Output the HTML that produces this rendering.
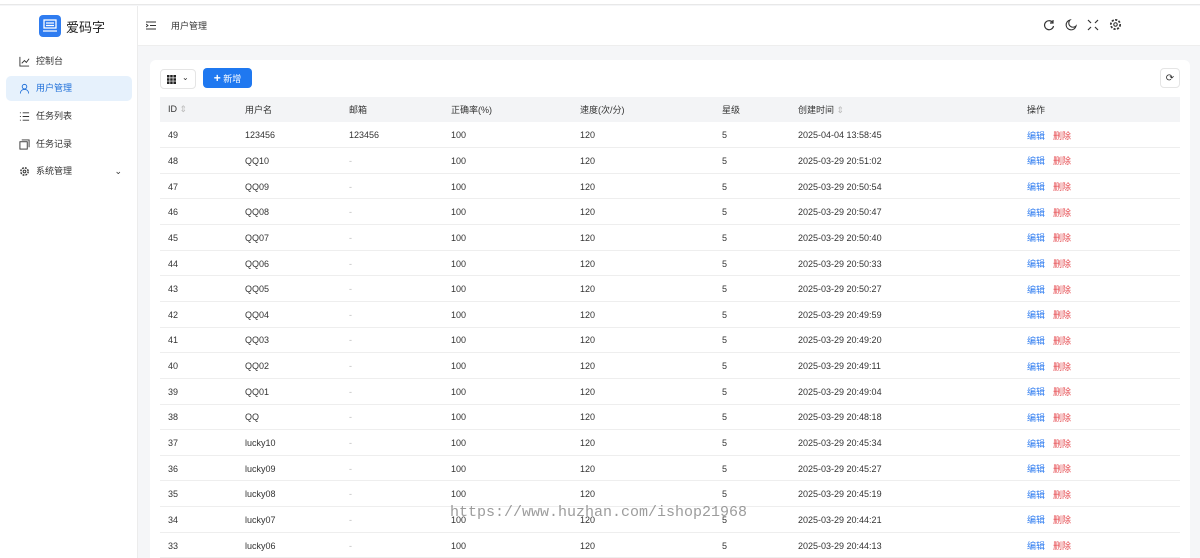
<!DOCTYPE html><html><head><meta charset="utf-8"><style>
*{margin:0;padding:0;box-sizing:border-box}
html,body{width:1200px;height:558px;overflow:hidden}
body{font-family:"Liberation Sans","Noto Sans CJK SC",sans-serif;font-size:9px;color:#333;background:#f5f6f8;position:relative}
.top{position:absolute;left:0;top:0;width:1200px;height:5px;background:#fff;border-bottom:1px solid #e8e8e8}
.side{position:absolute;left:0;top:6px;width:138px;height:552px;background:#fff;border-right:1px solid #ececec}
.logo{position:absolute;left:39px;top:9px;width:22px;height:22px;background:#2f7cf0;border-radius:4px}
.logot{position:absolute;left:66px;top:11px;font-size:13px;color:#222}
.mi{position:absolute;left:6px;width:126px;height:25px;border-radius:5px;line-height:25px;padding-left:30px;font-size:9px;color:#333}
.mi.act{background:#e6f1fc;color:#1e6fd9}
.ico{position:absolute;left:13px;top:7px;width:11px;height:11px}
.hdr{position:absolute;left:138px;top:6px;width:1062px;height:40px;background:#fff;border-bottom:1px solid #eee}
.card{position:absolute;left:150px;top:60px;width:1040px;height:510px;background:#fff;border-radius:6px}
table{position:absolute;left:10px;top:37px;width:1020px;border-collapse:collapse}
th{background:#f3f4f6;height:25px;text-align:left;font-weight:normal;color:#333;padding-left:8px}
td{height:25.65px;border-bottom:1px solid #eee;padding-left:8px;padding-top:1px;color:#333}
.e{color:#2f7cf0;margin-right:8px}.d{color:#e5484d}
.g{color:#bbb}
</style></head><body>
<div class="top"></div>
<div class="side">
<div class="logo"><svg width="22" height="22" viewBox="0 0 22 22"><rect x="5" y="5" width="12" height="8" fill="none" stroke="#fff" stroke-width="1.3"/><path d="M7 8h8M7 10.5h8M4 16h14" stroke="#fff" stroke-width="1.2"/></svg></div>
<div class="logot">爱码字</div>
<div class="mi" style="top:43px"><svg class="ico" viewBox="0 0 12 12"><path d="M1 1v10h10M3 8l3-3 2 2 3-4" fill="none" stroke="#333" stroke-width="1"/></svg>控制台</div>
<div class="mi act" style="top:70px"><svg class="ico" viewBox="0 0 12 12"><circle cx="6" cy="4" r="2.5" fill="none" stroke="#1e6fd9"/><path d="M1.5 11.5c0-3 2-4.5 4.5-4.5s4.5 1.5 4.5 4.5" fill="none" stroke="#1e6fd9"/></svg>用户管理</div>
<div class="mi" style="top:98px"><svg class="ico" viewBox="0 0 12 12"><path d="M1 2h1M1 6h1M1 10h1M4 2h7M4 6h7M4 10h7" stroke="#333"/></svg>任务列表</div>
<div class="mi" style="top:126px"><svg class="ico" viewBox="0 0 12 12"><rect x="1" y="3" width="8" height="8" fill="none" stroke="#333"/><path d="M3 1h8v8" fill="none" stroke="#333"/></svg>任务记录</div>
<div class="mi" style="top:153px"><svg class="ico" viewBox="0 0 12 12"><circle cx="6" cy="6" r="4" fill="none" stroke="#333" stroke-width="1.6" stroke-dasharray="2 1.2"/><circle cx="6" cy="6" r="1.5" fill="none" stroke="#333"/></svg>系统管理<span style="position:absolute;right:10px;font-size:9px">⌄</span></div>
</div>
<div class="hdr">
<svg style="position:absolute;left:8px;top:15px" width="10" height="9" viewBox="0 0 10 9"><path d="M0 1h10M4 4.5h6M0 8h10M0 3l2 1.5L0 6" stroke="#333" fill="none"/></svg>
<div style="position:absolute;left:33px;top:13px;font-size:9px">用户管理</div>
<svg style="position:absolute;left:905px;top:13px" width="12" height="12" viewBox="0 0 12 12"><path d="M10 4A4.5 4.5 0 1 0 10.5 7M10 1v3H7" fill="none" stroke="#333" stroke-width="1.2"/></svg>
<svg style="position:absolute;left:927px;top:13px" width="12" height="12" viewBox="0 0 12 12"><path d="M5 1a5 5 0 1 0 6 6A4 4 0 0 1 5 1z" fill="none" stroke="#333" stroke-width="1.1"/></svg>
<svg style="position:absolute;left:949px;top:13px" width="12" height="12" viewBox="0 0 12 12"><path d="M1 1l3 3M11 1L8 4M1 11l3-3M11 11L8 8" stroke="#333" stroke-width="1.2"/></svg>
<svg style="position:absolute;left:971px;top:12px" width="13" height="13" viewBox="0 0 12 12"><circle cx="6" cy="6" r="4.3" fill="none" stroke="#333" stroke-width="1.6" stroke-dasharray="2 1.3"/><circle cx="6" cy="6" r="1.6" fill="none" stroke="#333"/></svg>
</div>
<div class="card">
<div style="position:absolute;left:10px;top:9px;width:36px;height:20px;border:1px solid #e5e5e5;border-radius:4px"><svg style="position:absolute;left:6px;top:5px" width="9" height="9" viewBox="0 0 9 9"><path d="M0 0h2.5v2.5H0zM3.2 0h2.5v2.5H3.2zM6.4 0H9v2.5H6.4zM0 3.2h2.5v2.5H0zM3.2 3.2h2.5v2.5H3.2zM6.4 3.2H9v2.5H6.4zM0 6.4h2.5V9H0zM3.2 6.4h2.5V9H3.2zM6.4 6.4H9V9H6.4z" fill="#222"/></svg><span style="position:absolute;left:21px;top:3px;font-size:8px">⌄</span></div>
<div style="position:absolute;left:53px;top:8px;width:49px;height:20px;background:#1f78f0;border-radius:4px;color:#fff;line-height:20px;text-align:center;font-size:9px"><b style="font-size:12px">+</b> 新增</div>
<div style="position:absolute;left:1010px;top:8px;width:20px;height:20px;border:1px solid #e5e5e5;border-radius:4px;text-align:center;line-height:19px;font-size:10px">⟳</div>
<table>
<tr><th style="width:77px">ID <span class="g">⇕</span></th><th style="width:104px">用户名</th><th style="width:102px">邮箱</th><th style="width:129px">正确率(%)</th><th style="width:142px">速度(次/分)</th><th style="width:76px">星级</th><th style="width:229px">创建时间 <span class="g">⇕</span></th><th>操作</th></tr>
<tr><td>49</td><td>123456</td><td>123456</td><td>100</td><td>120</td><td>5</td><td>2025-04-04 13:58:45</td><td><span class="e">编辑</span><span class="d">删除</span></td></tr>
<tr><td>48</td><td>QQ10</td><td class="g">-</td><td>100</td><td>120</td><td>5</td><td>2025-03-29 20:51:02</td><td><span class="e">编辑</span><span class="d">删除</span></td></tr>
<tr><td>47</td><td>QQ09</td><td class="g">-</td><td>100</td><td>120</td><td>5</td><td>2025-03-29 20:50:54</td><td><span class="e">编辑</span><span class="d">删除</span></td></tr>
<tr><td>46</td><td>QQ08</td><td class="g">-</td><td>100</td><td>120</td><td>5</td><td>2025-03-29 20:50:47</td><td><span class="e">编辑</span><span class="d">删除</span></td></tr>
<tr><td>45</td><td>QQ07</td><td class="g">-</td><td>100</td><td>120</td><td>5</td><td>2025-03-29 20:50:40</td><td><span class="e">编辑</span><span class="d">删除</span></td></tr>
<tr><td>44</td><td>QQ06</td><td class="g">-</td><td>100</td><td>120</td><td>5</td><td>2025-03-29 20:50:33</td><td><span class="e">编辑</span><span class="d">删除</span></td></tr>
<tr><td>43</td><td>QQ05</td><td class="g">-</td><td>100</td><td>120</td><td>5</td><td>2025-03-29 20:50:27</td><td><span class="e">编辑</span><span class="d">删除</span></td></tr>
<tr><td>42</td><td>QQ04</td><td class="g">-</td><td>100</td><td>120</td><td>5</td><td>2025-03-29 20:49:59</td><td><span class="e">编辑</span><span class="d">删除</span></td></tr>
<tr><td>41</td><td>QQ03</td><td class="g">-</td><td>100</td><td>120</td><td>5</td><td>2025-03-29 20:49:20</td><td><span class="e">编辑</span><span class="d">删除</span></td></tr>
<tr><td>40</td><td>QQ02</td><td class="g">-</td><td>100</td><td>120</td><td>5</td><td>2025-03-29 20:49:11</td><td><span class="e">编辑</span><span class="d">删除</span></td></tr>
<tr><td>39</td><td>QQ01</td><td class="g">-</td><td>100</td><td>120</td><td>5</td><td>2025-03-29 20:49:04</td><td><span class="e">编辑</span><span class="d">删除</span></td></tr>
<tr><td>38</td><td>QQ</td><td class="g">-</td><td>100</td><td>120</td><td>5</td><td>2025-03-29 20:48:18</td><td><span class="e">编辑</span><span class="d">删除</span></td></tr>
<tr><td>37</td><td>lucky10</td><td class="g">-</td><td>100</td><td>120</td><td>5</td><td>2025-03-29 20:45:34</td><td><span class="e">编辑</span><span class="d">删除</span></td></tr>
<tr><td>36</td><td>lucky09</td><td class="g">-</td><td>100</td><td>120</td><td>5</td><td>2025-03-29 20:45:27</td><td><span class="e">编辑</span><span class="d">删除</span></td></tr>
<tr><td>35</td><td>lucky08</td><td class="g">-</td><td>100</td><td>120</td><td>5</td><td>2025-03-29 20:45:19</td><td><span class="e">编辑</span><span class="d">删除</span></td></tr>
<tr><td>34</td><td>lucky07</td><td class="g">-</td><td>100</td><td>120</td><td>5</td><td>2025-03-29 20:44:21</td><td><span class="e">编辑</span><span class="d">删除</span></td></tr>
<tr><td>33</td><td>lucky06</td><td class="g">-</td><td>100</td><td>120</td><td>5</td><td>2025-03-29 20:44:13</td><td><span class="e">编辑</span><span class="d">删除</span></td></tr>
</table>
</div>
<div style="position:absolute;left:450px;top:504px;font-family:'Liberation Mono',monospace;font-size:15px;color:rgba(90,90,90,.6)">https://www.huzhan.com/ishop21968</div>
</body></html>
